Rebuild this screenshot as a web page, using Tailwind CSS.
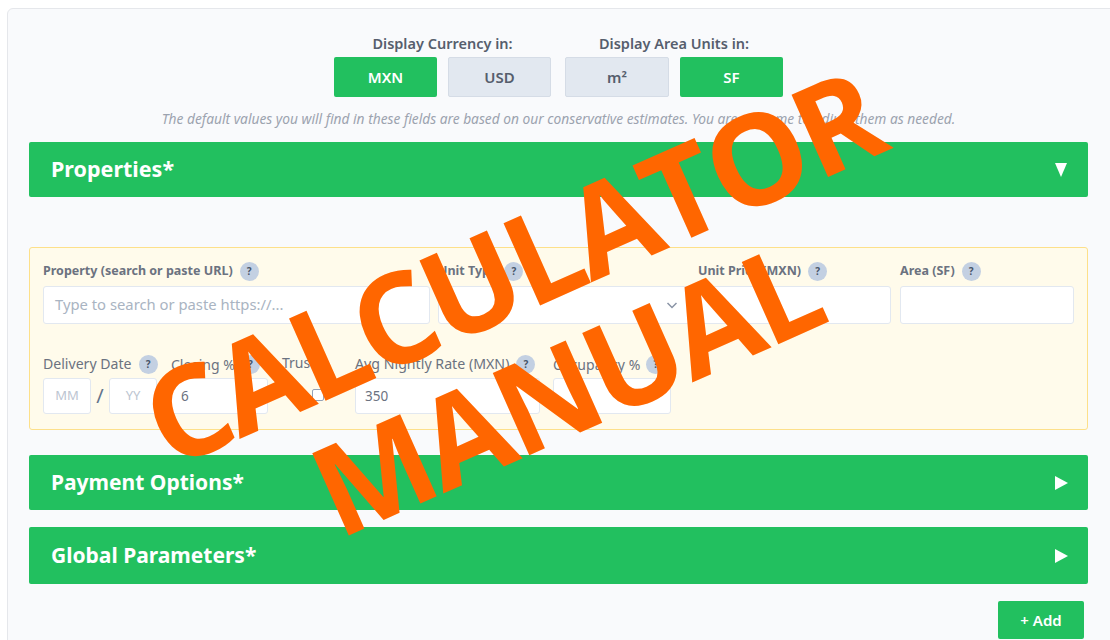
<!DOCTYPE html>
<html lang="en">
<head>
    <meta charset="UTF-8">
    <title>Calculator Manual</title>
    <script src="https://cdn.jsdelivr.net/npm/@tailwindcss/browser@4"></script>
</head>
<body class="bg-white font-['Noto_Sans',sans-serif] w-[1110px] h-[640px] overflow-hidden relative">
    <!-- card -->
    <div class="ml-[7px] mt-[8px] w-[1120px] h-[660px] bg-[#f9fafc] border border-[#e5e7eb] rounded-md px-[21px] pt-[24px]">
        <div class="flex justify-center gap-[14px] w-[1059px]">
            <div class="w-[217px]">
                <div class="text-[14.5px] leading-[20px] font-semibold text-[#565e6d] text-center">Display Currency in:</div>
                <div class="flex gap-[11px] mt-[4px]">
                    <div class="w-[103px] h-[40px] bg-[#22c05f] rounded-[2px] text-white text-[15px] font-semibold flex items-center justify-center">MXN</div>
                    <div class="w-[103px] h-[40px] bg-[#e2e8f0] border border-[#d5dce6] rounded-[2px] text-[#565e6d] text-[15px] font-semibold flex items-center justify-center">USD</div>
                </div>
            </div>
            <div class="w-[218px]">
                <div class="text-[14.5px] leading-[20px] font-semibold text-[#565e6d] text-center">Display Area Units in:</div>
                <div class="flex gap-[11px] mt-[4px]">
                    <div class="w-[104px] h-[40px] bg-[#e2e8f0] border border-[#d5dce6] rounded-[2px] text-[#565e6d] text-[15px] font-semibold flex items-center justify-center">m²</div>
                    <div class="w-[103px] h-[40px] bg-[#22c05f] rounded-[2px] text-white text-[15px] font-semibold flex items-center justify-center">SF</div>
                </div>
            </div>
        </div>
        <p class="mt-[13px] text-center text-[13.75px] leading-[18px] italic text-[#9ca3af] w-[1059px] whitespace-nowrap">The default values you will find in these fields are based on our conservative estimates. You are welcome to adjust them as needed.</p>

        <div class="w-[1059px]">
            <div class="mt-[14px] h-[55px] bg-[#22c05f] rounded-[2px] flex items-center justify-between px-[22px] text-white">
                <span class="text-[21.5px] font-bold">Properties*</span>
                <span class="w-0 h-0 border-x-[6.5px] border-x-transparent border-t-[14px] border-t-white mr-[-1px]"></span>
            </div>

            <!-- property row -->
            <div class="mt-[50px] h-[183px] bg-[#fffbeb] border border-[#fde08a] rounded-[3px] px-[13px] pt-[13px]">
                <div class="flex gap-[8px]">
                    <div class="w-[387px]">
                        <div class="flex items-center h-[20px] gap-[7px] text-[12.5px] font-bold text-[#6b7280]">Property (search or paste URL) <span class="w-[19px] h-[19px] rounded-full bg-[#c3d0e2] text-[#475569] text-[10px] font-bold flex items-center justify-center">?</span></div>
                        <div class="mt-[5px] h-[38px] bg-white border border-[#e2e8f0] rounded-[3px] px-[11px] pb-[2px] flex items-center text-[14.8px] text-[#a9b4c2]">Type to search or paste https://...</div>
                    </div>
                    <div class="w-[252px]">
                        <div class="flex items-center h-[20px] gap-[7px] text-[12.5px] font-bold text-[#6b7280]">Unit Type <span class="w-[19px] h-[19px] rounded-full bg-[#c3d0e2] text-[#475569] text-[10px] font-bold flex items-center justify-center">?</span></div>
                        <div class="mt-[5px] h-[38px] bg-white border border-[#e2e8f0] rounded-[3px] px-[11px] flex items-center justify-between text-[14px] text-[#6b7280]">
                            <span>-</span>
                            <svg class="w-[14px] h-[14px] mr-[-1px]" viewBox="0 0 14 14" fill="none" stroke="#8a94a6" stroke-width="1.5"><path d="M2.5 5l4.5 4.5L11.5 5"/></svg>
                        </div>
                    </div>
                    <div class="w-[193px]">
                        <div class="flex items-center h-[20px] gap-[7px] text-[12.5px] font-bold text-[#6b7280]">Unit Price (MXN) <span class="w-[19px] h-[19px] rounded-full bg-[#c3d0e2] text-[#475569] text-[10px] font-bold flex items-center justify-center">?</span></div>
                        <div class="mt-[5px] h-[38px] bg-white border border-[#e2e8f0] rounded-[3px]"></div>
                    </div>
                    <div class="w-[174px] ml-[1px]">
                        <div class="flex items-center h-[20px] gap-[7px] text-[12.5px] font-bold text-[#6b7280]">Area (SF) <span class="w-[19px] h-[19px] rounded-full bg-[#c3d0e2] text-[#475569] text-[10px] font-bold flex items-center justify-center">?</span></div>
                        <div class="mt-[5px] h-[38px] bg-white border border-[#e2e8f0] rounded-[3px]"></div>
                    </div>
                </div>
                <div class="flex mt-[30px]">
                    <div class="w-[128px]">
                        <div class="flex items-center h-[20px] gap-[7px] text-[14.1px] text-[#6b7280]">Delivery Date <span class="w-[19px] h-[19px] rounded-full bg-[#c3d0e2] text-[#475569] text-[10px] font-bold flex items-center justify-center">?</span></div>
                        <div class="flex items-center mt-[4px]">
                            <div class="w-[48px] h-[36px] bg-white border border-[#e2e8f0] rounded-[3px] flex items-center justify-center text-[13px] text-[#bcc5d1]">MM</div>
                            <span class="w-[18px] text-center text-[#64748b] text-[20px] leading-none">/</span>
                            <div class="w-[48px] h-[36px] bg-white border border-[#e2e8f0] rounded-[3px] flex items-center justify-center text-[13px] text-[#bcc5d1]">YY</div>
                        </div>
                    </div>
                    <div class="w-[111px]">
                        <div class="flex items-center h-[20px] gap-[6px] text-[14px] text-[#6b7280]">Closing % <span class="w-[19px] h-[19px] rounded-full bg-[#c3d0e2] text-[#475569] text-[10px] font-bold flex items-center justify-center">?</span></div>
                        <div class="mt-[4px] w-[97px] h-[36px] bg-white border border-[#e2e8f0] rounded-[3px] px-[9px] flex items-center text-[13.5px] text-[#6b7280]">6</div>
                    </div>
                    <div class="w-[73px]">
                        <div class="flex items-center h-[20px] text-[14px] text-[#6b7280] mt-[-2px]">Trust</div>
                        <div class="mt-[17px] ml-[30px] w-[12px] h-[12px] bg-white border border-[#94a3b8] rounded-[2px]"></div>
                    </div>
                    <div class="w-[198px]">
                        <div class="flex items-center h-[20px] gap-[7px] text-[14.2px] text-[#6b7280] whitespace-nowrap">Avg Nightly Rate (MXN) <span class="w-[19px] h-[19px] rounded-full bg-[#c3d0e2] text-[#475569] text-[10px] font-bold flex items-center justify-center">?</span></div>
                        <div class="mt-[4px] w-[185px] h-[36px] bg-white border border-[#e2e8f0] rounded-[3px] px-[9px] flex items-center text-[13.5px] text-[#6b7280]">350</div>
                    </div>
                    <div class="w-[118px]">
                        <div class="flex items-center h-[20px] gap-[6px] text-[14px] text-[#6b7280] whitespace-nowrap">Occupancy % <span class="w-[19px] h-[19px] rounded-full bg-[#c3d0e2] text-[#475569] text-[10px] font-bold flex items-center justify-center">?</span></div>
                        <div class="mt-[4px] h-[36px] bg-white border border-[#e2e8f0] rounded-[3px]"></div>
                    </div>
                </div>
            </div>

            <div class="mt-[25px] h-[55px] bg-[#22c05f] rounded-[2px] flex items-center justify-between px-[22px] text-white">
                <span class="text-[21px] font-bold">Payment Options*</span>
                <span class="w-0 h-0 border-y-[7px] border-y-transparent border-l-[13px] border-l-white mr-[-2px]"></span>
            </div>
            <div class="mt-[17px] h-[57px] bg-[#22c05f] rounded-[2px] flex items-center justify-between px-[22px] text-white">
                <span class="text-[21px] font-bold">Global Parameters*</span>
                <span class="w-0 h-0 border-y-[7px] border-y-transparent border-l-[13px] border-l-white mr-[-2px]"></span>
            </div>
            <div class="flex justify-end mt-[17px] pr-[4px]">
                <div class="w-[86px] h-[38px] bg-[#22c05f] rounded-[2px] text-white text-[15px] font-semibold flex items-center justify-center">+ Add</div>
            </div>
        </div>
    </div>

    <!-- stamped overlay -->
    <div class="absolute left-[510px] top-[265px] -translate-x-1/2 -translate-y-1/2 -rotate-[24deg] whitespace-nowrap font-['Open_Sans',sans-serif] font-bold tracking-[-4px] text-[#ff6600] text-[126px] leading-none">CALCULATOR</div>
    <div class="absolute left-[564px] top-[386px] -translate-x-1/2 -translate-y-1/2 -rotate-[24deg] whitespace-nowrap font-['Open_Sans',sans-serif] font-bold tracking-[-4px] text-[#ff6600] text-[126px] leading-none">MANUAL</div>
</body>
</html>
